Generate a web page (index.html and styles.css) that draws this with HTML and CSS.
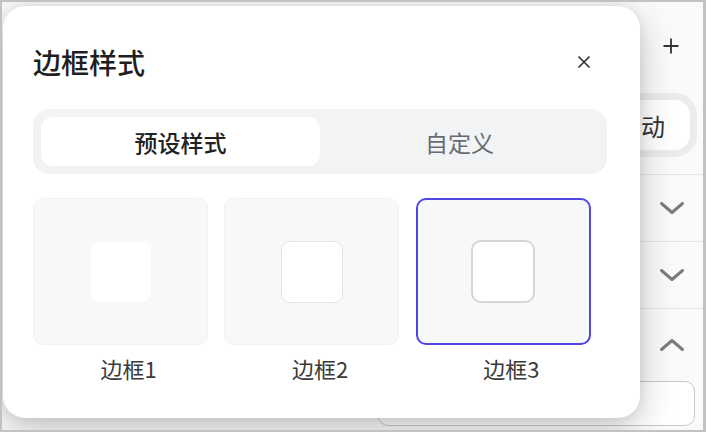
FILE: index.html
```html
<!DOCTYPE html>
<html lang="zh-CN">
<head>
<meta charset="utf-8">
<title>边框样式</title>
<link rel="stylesheet" href="styles.css">
</head>
<body>
<div class="window">
  <div class="page">
    <div class="spacer"></div>
    <aside class="side">
      <div class="side-head">
        <svg class="plus" width="18" height="18" viewBox="0 0 18 18"><path d="M9 1.5V16.5M1.5 9H16.5" stroke="#333" stroke-width="1.8" fill="none"/></svg>
      </div>
      <div class="side-row pill-row">
        <div class="pill">自动</div>
      </div>
      <div class="side-row">
        <svg class="chev" width="26" height="14" viewBox="0 0 26 14"><path d="M2.5 2.5L13 11.5L23.5 2.5" stroke="#7c7c7c" stroke-width="3" fill="none" stroke-linecap="round" stroke-linejoin="round"/></svg>
      </div>
      <div class="side-row">
        <svg class="chev" width="26" height="14" viewBox="0 0 26 14"><path d="M2.5 2.5L13 11.5L23.5 2.5" stroke="#7c7c7c" stroke-width="3" fill="none" stroke-linecap="round" stroke-linejoin="round"/></svg>
      </div>
      <div class="side-row last">
        <svg class="chev" width="26" height="14" viewBox="0 0 26 14"><path d="M2.5 11.5L13 2.5L23.5 11.5" stroke="#7c7c7c" stroke-width="3" fill="none" stroke-linecap="round" stroke-linejoin="round"/></svg>
      </div>
      <div class="field"></div>
    </aside>
  </div>

  <div class="modal">
    <div class="modal-head">
      <h2 class="title">边框样式</h2>
      <svg class="close" width="14" height="14" viewBox="0 0 14 14"><path d="M1.5 1.5L12.5 12.5M12.5 1.5L1.5 12.5" stroke="#333" stroke-width="1.7" fill="none"/></svg>
    </div>
    <div class="tabs">
      <div class="tab active">预设样式</div>
      <div class="tab">自定义</div>
    </div>
    <div class="options">
      <div class="option">
        <div class="card"><div class="sample s1"></div></div>
        <div class="label">边框1</div>
      </div>
      <div class="option">
        <div class="card"><div class="sample s2"></div></div>
        <div class="label">边框2</div>
      </div>
      <div class="option">
        <div class="card selected"><div class="sample s3"></div></div>
        <div class="label">边框3</div>
      </div>
    </div>
  </div>
</div>
</body>
</html>
```
FILE: styles.css
```css
* { box-sizing: border-box; }
html, body {
  margin: 0;
  padding: 0;
}
body {
  width: 706px;
  height: 432px;
  background: #c2c2c2;
  font-family: "Noto Sans CJK SC", "Noto Sans", sans-serif;
  overflow: hidden;
}
.window {
  position: relative;
  margin: 2px 3px 2px 2px;
  height: 428px;
  background: #fafafa;
  overflow: hidden;
}
.page {
  display: flex;
  height: 100%;
}
.spacer { flex: 1; }
.side {
  width: 331px;
  display: flex;
  flex-direction: column;
  padding-right: 6px;
}
.side-head {
  height: 88px;
  display: flex;
  align-items: center;
  justify-content: flex-end;
  padding-right: 17px;
}
.side-row {
  height: 67px;
  border-bottom: 1px solid #e6e6e6;
  margin-right: -6px;
  display: flex;
  align-items: center;
  justify-content: flex-end;
  padding-right: 18px;
}
.pill-row {
  height: 85px;
  align-items: flex-start;
  padding-top: 3px;
  padding-right: 6px;
}
.side-row.last { border-bottom: none; height: 72px; }
.pill {
  height: 64px;
  border: 7px solid #ececec;
  border-radius: 22px;
  background: #fff;
  padding: 0 25px 0 30px;
  display: flex;
  align-items: center;
  font-size: 24px;
  color: #333;
}
.field {
  margin-left: 6px;
  margin-right: 2px;
  height: 45px;
  border: 1.5px solid #c9c9c9;
  border-radius: 10px;
  background: #fff;
}

.modal {
  position: absolute;
  left: 1px;
  top: 4px;
  width: 637px;
  height: 412px;
  background: #fff;
  border-radius: 22px;
  padding: 0 33px 0 30px;
  box-shadow: 0 12px 36px rgba(0,0,0,0.22), 0 0 12px rgba(0,0,0,0.08);
}
.modal-head {
  display: flex;
  align-items: center;
  justify-content: space-between;
  height: 40px;
  margin-top: 36px;
}
.title {
  margin: 0;
  font-size: 28px;
  font-weight: 500;
  color: #1f1f1f;
  line-height: 40px;
}
.close { margin-right: 16px; }
.tabs {
  margin-top: 27px;
  height: 65px;
  background: #f2f3f5;
  border-radius: 16px;
  padding: 8px;
  display: flex;
}
.tab {
  flex: 1;
  display: flex;
  align-items: center;
  justify-content: center;
  font-size: 23px;
  color: #676b73;
  border-radius: 12px;
}
.tab.active {
  background: #fff;
  color: #222;
  font-weight: 500;
}
.options {
  margin-top: 24px;
  display: grid;
  grid-template-columns: repeat(3, 1fr);
}
.option {
  display: flex;
  flex-direction: column;
}
.card {
  width: 175px;
  height: 147px;
  border-radius: 10px;
  background: #f7f8fa;
  border: 1px solid #f1f2f4;
  display: flex;
  align-items: center;
  justify-content: center;
}
.card.selected {
  border: 2px solid #4f46e5;
}
.sample {
  background: #fff;
}
.s1 { width: 60px; height: 60px; border-radius: 8px; }
.s2 { width: 62px; height: 62px; border-radius: 9px; border: 1.5px solid #e6e6e6; }
.s3 { width: 64px; height: 63px; border-radius: 10px; border: 2px solid #d6d6d6; }
.label {
  margin-top: 9px;
  line-height: 28px;
  font-size: 22px;
  color: #3a3a3a;
  text-align: center;
}
```
